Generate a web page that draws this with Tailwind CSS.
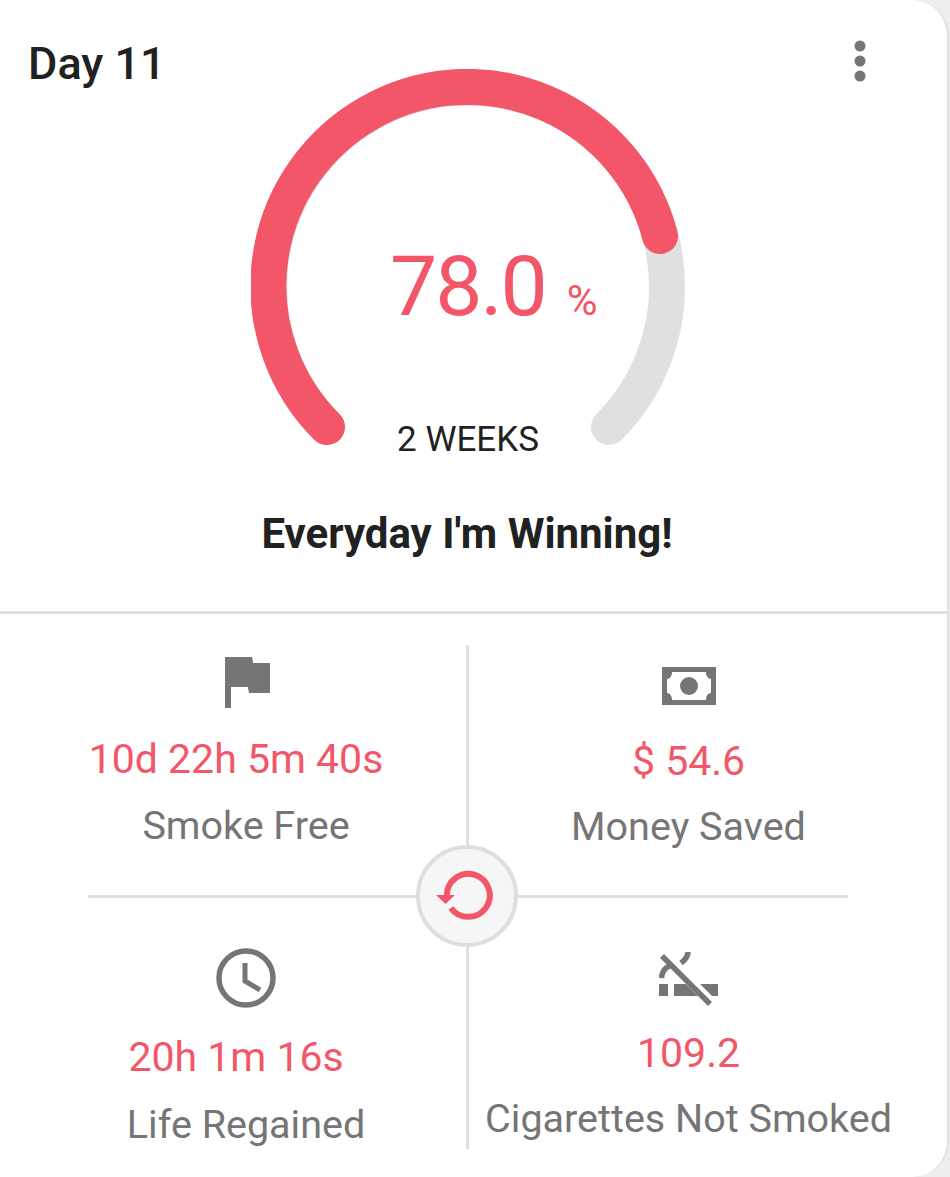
<!DOCTYPE html>
<html lang="en">
<head>
    <meta charset="UTF-8">
    <title>Day 11</title>
    <script src="https://cdn.jsdelivr.net/npm/@tailwindcss/browser@4"></script>
</head>
<body class="bg-[#eeeeee] overflow-hidden">
    <div class="w-[949px] h-[1177px] bg-white border-r-2 border-[#e0e0e0] rounded-r-[36px] font-['Roboto',sans-serif] overflow-hidden">
        <!-- top: gauge -->
        <div class="relative h-[611px] border-b-[3px] border-[#e0e0e0] box-content">
            <div class="flex justify-between items-start pl-[28px] pr-[77px]">
                <span class="text-[45px] leading-[50px] mt-[39px] font-medium text-[#212121]">Day 11</span>
                <svg class="mt-[40px]" width="20" height="44" viewBox="0 0 20 44" fill="#757575">
                    <circle cx="10" cy="6" r="5.5"/><circle cx="10" cy="21" r="5.5"/><circle cx="10" cy="36" r="5.5"/>
                </svg>
            </div>
            <div class="absolute left-[251px] top-[69px] w-[434px] h-[380px]">
                <svg width="434" height="380" viewBox="0 0 434 380" fill="none" stroke-width="36" stroke-linecap="round">
                    <path d="M76 358 A199 199 0 1 1 358 358" stroke="#e0e0e0"/>
                    <path d="M76 358 A199 199 0 1 1 409 167" stroke="#f35668"/>
                </svg>
                <div class="absolute left-[139px] top-[172px] flex items-baseline text-[#f35668] whitespace-nowrap">
                    <span class="text-[84px] leading-[92px] tracking-[-2px] font-normal">78.0</span>
                    <span class="text-[42px] leading-[40px] font-normal ml-[21px]">%</span>
                </div>
                <div class="absolute left-0 top-[351px] w-full text-center text-[35px] leading-[40px] text-[#212121]">2 WEEKS</div>
            </div>
            <div class="absolute left-0 top-[511px] w-full pr-[13px] text-center text-[42px] leading-[46px] font-bold text-[#212121]">Everyday I'm Winning!</div>
        </div>

        <!-- bottom: stats -->
        <div class="relative w-[760px] ml-[88px] mt-[31px] grid grid-cols-[381px_379px] text-[39.5px] leading-[46px] whitespace-nowrap">
            <div class="h-[253px] border-r-[3px] border-b-[3px] border-[#e0e0e0] flex flex-col items-center pr-[62px]">
                <svg width="72" height="72" viewBox="0 0 24 24" fill="#757575">
                    <path d="M14.4 6L14 4H5v17h2v-7h5.6l.4 2h7V6z"/>
                </svg>
                <span class="text-[#f35668] text-[41px] mt-[19px] mr-[20px]">10d 22h 5m 40s</span>
                <span class="text-[#757575] mt-[21px]">Smoke Free</span>
            </div>
            <div class="h-[253px] border-b-[3px] border-[#e0e0e0] flex flex-col items-center pl-[60px]">
                <svg class="mt-[22px]" width="54" height="38" viewBox="0 0 54 38" fill="#757575">
                    <path fill-rule="evenodd" d="M0 0H54V38H0ZM10 5 C10 9 8 12 5 12 V26 C8 26 10 29 10 33 H44 C44 29 46 26 49 26 V12 C46 12 44 9 44 5Z"/>
                    <circle cx="27" cy="19" r="9"/>
                </svg>
                <span class="text-[#f35668] text-[41px] mt-[33px]">$ 54.6</span>
                <span class="text-[#757575] mt-[20px]">Money Saved</span>
            </div>
            <div class="h-[251px] border-r-[3px] border-[#e0e0e0] flex flex-col items-center pr-[62px]">
                <svg class="mt-[48px]" width="64" height="64" viewBox="0 0 64 64" fill="none" stroke="#757575" stroke-width="5.5">
                    <circle cx="32" cy="32" r="27"/>
                    <path d="M31 17V35L46 44" stroke-width="5"/>
                </svg>
                <span class="text-[#f35668] text-[41px] mt-[24px] mr-[20px]">20h 1m 16s</span>
                <span class="text-[#757575] mt-[22px]">Life Regained</span>
            </div>
            <div class="h-[251px] flex flex-col items-center pl-[60px]">
                <svg class="mt-[53px] ml-[3px]" width="64" height="60" viewBox="0 0 64 60" fill="none" stroke="#757575">
                    <path d="M1 33H10V45H1ZM16 33H60V45H16Z" fill="#757575" stroke="none"/>
                    <path d="M7 5L52 50" stroke="#fff" stroke-width="10"/>
                    <path d="M4 5L52 53" stroke-width="5.5"/>
                    <path d="M30 1C30 6 27 9 23 12" stroke-width="5.5"/>
                    <path d="M12 15C6 17 4 21 3.5 27" stroke-width="5.5"/>
                </svg>
                <span class="text-[#f35668] text-[41px] mt-[19px]">109.2</span>
                <span class="text-[#757575] mt-[20px]">Cigarettes Not Smoked</span>
            </div>
            <!-- reset button over the crossing -->
            <div class="absolute left-[328px] top-[200px] w-[102px] h-[102px] rounded-full bg-[#f6f6f6] border-4 border-[#dedede] flex items-center justify-center">
                <svg width="66" height="60" viewBox="0 0 66 60" fill="none" stroke="#f35668" stroke-width="6">
                    <path d="M16.9 42A21.5 21.5 0 1 0 12.8 29.5"/>
                    <path d="M2 29H21L11.5 38Z" fill="#f35668" stroke="none"/>
                </svg>
            </div>
        </div>
    </div>
</body>
</html>
